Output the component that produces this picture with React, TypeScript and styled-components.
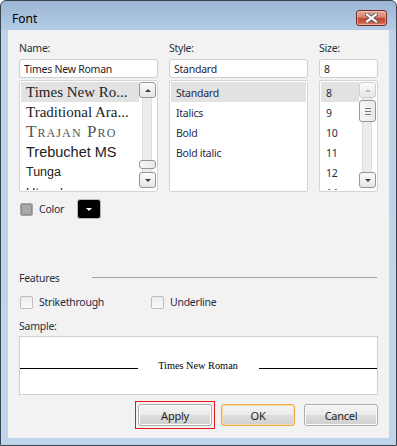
import React from "react";
import styled, { createGlobalStyle, css } from "styled-components";

const UI = `"Noto Sans", "Open Sans", sans-serif`;
const UI_SIZE = 10.5;
const UI_SPACING = -0.25;

const GlobalStyle = createGlobalStyle`
  html, body { margin: 0; padding: 0; background: #ffffff; }
  body { font-family: ${UI}; }
  * { box-sizing: border-box; }
`;

const Window = styled.div`
  width: 397px;
  height: 446px;
  border: 1px solid #3a4552;
  border-radius: 6px 6px 0 0;
  background: linear-gradient(to bottom, #9bb6d4 0px, #b4cce6 29px, #bcd3eb 30px, #bed5ec 100%);
  display: flex;
  flex-direction: column;
  padding: 0 7px 7px 7px;
  overflow: hidden;
`;

const TitleBar = styled.div`
  height: 29px;
  flex: none;
  display: flex;
  align-items: flex-start;
  justify-content: space-between;
  padding-left: 4px;
`;

const Title = styled.div`
  margin-top: 10px;
  font-family: ${UI};
  font-size: 12px;
  line-height: 16px;
  color: #000;
`;

const CloseButton = styled.div`
  margin-top: 9px;
  margin-right: 2px;
  width: 31px;
  height: 16px;
  border: 1px solid #6b2d25;
  border-radius: 3px;
  background: linear-gradient(to bottom, #e9a99c 0%, #d88172 45%, #c04a35 50%, #c9573f 80%, #e08a6c 100%);
  box-shadow: inset 0 0 0 1px rgba(255, 220, 210, 0.45);
  display: flex;
  align-items: center;
  justify-content: center;
`;

const Client = styled.div`
  flex: 1;
  background: #f2f2f2;
  padding: 10px 11px 12px 11px;
  display: flex;
  flex-direction: column;
`;

const Columns = styled.div`
  display: grid;
  grid-template-columns: 139px 139px 59px;
  column-gap: 11px;
`;

const Column = styled.div`
  display: flex;
  flex-direction: column;
`;

const Label = styled.div`
  font-family: ${UI};
  font-size: ${UI_SIZE}px;
  letter-spacing: ${UI_SPACING}px;
  line-height: 17px;
  height: 17px;
  color: #2a2f3a;
  white-space: nowrap;
`;

const TextBox = styled.div`
  margin-top: 2px;
  height: 19px;
  border: 1px solid #cfcfcf;
  border-radius: 3px;
  background: #fff;
  padding-left: 4px;
  padding-top: 1px;
  display: flex;
  align-items: center;
  font-family: ${UI};
  font-size: ${UI_SIZE}px;
  letter-spacing: ${UI_SPACING}px;
  color: #1e1e2a;
  white-space: nowrap;
  overflow: hidden;
`;

const ListBox = styled.div`
  margin-top: 2px;
  height: 112px;
  border: 1px solid #d4d4d4;
  border-radius: 2px;
  background: #fff;
  padding: 1px;
  display: flex;
  overflow: hidden;
`;

const Items = styled.div`
  flex: 1;
  min-width: 0;
  overflow: hidden;
  display: flex;
  flex-direction: column;
`;

const Item = styled.div<{ $selected?: boolean; $font?: string; $size?: number; $color?: string; $caps?: boolean; $spacing?: number }>`
  flex: none;
  height: 20px;
  display: flex;
  align-items: center;
  padding-left: 5px;
  padding-top: ${(p) => (p.$font ? 0 : 2)}px;
  white-space: nowrap;
  background: ${(p) => (p.$selected ? "#e2e2e2" : "transparent")};
  font-family: ${(p) => p.$font ?? UI};
  font-size: ${(p) => p.$size ?? UI_SIZE}px;
  color: ${(p) => p.$color ?? "#1f2a48"};
  letter-spacing: ${(p) => p.$spacing ?? UI_SPACING}px;
  ${(p) =>
    p.$caps &&
    css`
      font-variant: small-caps;
    `}
`;

const ScrollBar = styled.div`
  flex: none;
  width: 17px;
  display: flex;
  flex-direction: column;
  padding-bottom: 2px;
`;

const ArrowButton = styled.div<{ $disabled?: boolean }>`
  flex: none;
  height: 16px;
  border: 1px solid ${(p) => (p.$disabled ? "#c9ced4" : "#8f979f")};
  border-radius: 3px;
  background: linear-gradient(to bottom, #fbfbfb, #e6e6e6);
  display: flex;
  align-items: center;
  justify-content: center;
`;

const Arrow = styled.span<{ $dir: "up" | "down"; $disabled?: boolean }>`
  width: 0;
  height: 0;
  border-left: 3px solid transparent;
  border-right: 3px solid transparent;
  ${(p) =>
    p.$dir === "up"
      ? css`
          border-bottom: 3px solid ${p.$disabled ? "#b8bcc2" : "#3c3c3c"};
        `
      : css`
          border-top: 3px solid ${p.$disabled ? "#b8bcc2" : "#3c3c3c"};
        `}
`;

const Track = styled.div`
  flex: 1;
  display: flex;
  flex-direction: column;
  background: linear-gradient(to right, transparent 3px, #dedede 3px, #dedede 4px, #ececec 4px, #ececec 12px, #dedede 12px, #dedede 13px, transparent 13px);
`;

const Thumb = styled.div<{ $offset: number; $height: number }>`
  flex: none;
  margin-top: ${(p) => p.$offset}px;
  height: ${(p) => p.$height}px;
  border: 1px solid #8f979f;
  border-radius: 3px;
  background: linear-gradient(to right, #f7f7f7, #e9e9e9);
  display: flex;
  flex-direction: column;
  align-items: center;
  justify-content: center;
  gap: 2px;
`;

const Grip = styled.span`
  width: 6px;
  height: 1px;
  background: #6f7780;
`;

const ColorRow = styled.div`
  margin-top: 7px;
  height: 20px;
  display: flex;
  align-items: center;
`;

const CheckLabel = styled.label`
  display: flex;
  align-items: center;
  gap: 6px;
  font-family: ${UI};
  font-size: ${UI_SIZE}px;
  letter-spacing: ${UI_SPACING}px;
  line-height: 15px;
  color: #1f2a48;
  white-space: nowrap;
`;

const CheckBox = styled.span<{ $mixed?: boolean }>`
  width: 13px;
  height: 13px;
  margin-left: 1px;
  border: 1px solid ${(p) => (p.$mixed ? "#a5a5a5" : "#bdbdbd")};
  border-radius: 2px;
  background: linear-gradient(to bottom, #ececec, #fafafa);
  display: flex;
  align-items: center;
  justify-content: center;
  ${(p) =>
    p.$mixed &&
    css`
      &::after {
        content: "";
        width: 9px;
        height: 9px;
        border-radius: 1px;
        background: #a8a8a8;
        border: 1px solid #8c8c8c;
      }
    `}
`;

const SwatchButton = styled.div`
  margin-left: 13px;
  width: 24px;
  height: 20px;
  border: 1px solid #b9b9b9;
  border-radius: 3px;
  background: #000;
  display: flex;
  align-items: center;
  justify-content: center;
`;

const SwatchArrow = styled.span`
  width: 0;
  height: 0;
  border-left: 3px solid transparent;
  border-right: 3px solid transparent;
  border-top: 3px solid #fff;
`;

const GroupHeader = styled.div`
  margin-top: 51px;
  height: 15px;
  display: flex;
  align-items: center;
  gap: 32px;
`;

const GroupTitle = styled.span`
  font-family: ${UI};
  font-size: ${UI_SIZE}px;
  letter-spacing: ${UI_SPACING}px;
  line-height: 15px;
  padding-top: 1px;
  color: #2a2f3a;
`;

const GroupLine = styled.span`
  flex: 1;
  height: 1px;
  background: #a3a3a3;
  margin-right: 1px;
`;

const OptionsRow = styled.div`
  margin-top: 10px;
  height: 14px;
  display: grid;
  grid-template-columns: 131px auto;
  align-items: center;
`;

const SampleLabel = styled(Label)`
  margin-top: 9px;
`;

const SampleBox = styled.div`
  margin-top: 1px;
  height: 59px;
  border: 1px solid #d0d0d0;
  background: #fff;
  display: flex;
  align-items: center;
`;

const SampleLine = styled.span`
  flex: 1;
  height: 1px;
  margin-top: 6px;
  background: #000;
`;

const SampleText = styled.span`
  padding: 0 21px 0 20px;
  font-family: "Liberation Serif", "Times New Roman", serif;
  font-size: 10.3px;
  color: #000;
  white-space: nowrap;
`;

const ButtonRow = styled.div`
  margin-top: 9px;
  display: flex;
  justify-content: flex-end;
  gap: 9px;
`;

const Button = styled.div<{ $default?: boolean; $marked?: boolean }>`
  position: relative;
  width: 74px;
  height: 22px;
  border: 1px solid ${(p) => (p.$default ? "#eba84b" : "#adadad")};
  border-radius: 3px;
  background: linear-gradient(to bottom, #f3f3f3 0%, #ebebeb 50%, #dddddd 51%, #cfcfcf 100%);
  box-shadow: inset 0 0 0 1px ${(p) => (p.$default ? "#fbdca4" : "#fcfcfc")};
  display: flex;
  align-items: center;
  justify-content: center;
  font-family: ${UI};
  font-size: ${UI_SIZE + 0.5}px;
  letter-spacing: ${UI_SPACING}px;
  color: #1e1e1e;
  ${(p) =>
    p.$marked &&
    css`
      &::after {
        content: "";
        position: absolute;
        inset: -4px;
        border: 1px solid #e8141b;
        pointer-events: none;
      }
    `}
`;

type FontItem = { text: string; font?: string; size?: number; color?: string; caps?: boolean; spacing?: number };

const fonts: FontItem[] = [
  { text: "Times New Ro...", font: `"Liberation Serif", serif`, size: 15, color: "#222", spacing: 0 },
  { text: "Traditional Ara...", font: `"Liberation Serif", serif`, size: 15, color: "#222", spacing: 0 },
  { text: "Trajan Pro", font: `"Liberation Serif", serif`, size: 17, color: "#555", caps: true, spacing: 1.1 },
  { text: "Trebuchet MS", font: `"Liberation Sans", sans-serif`, size: 14.5, color: "#222", spacing: 0 },
  { text: "Tunga", font: `"Liberation Sans", sans-serif`, size: 12.5, color: "#222", spacing: 0 },
  { text: "Utsaah", font: `"Liberation Sans", sans-serif`, size: 13, color: "#222", spacing: 0 },
];

const styles = ["Standard", "Italics", "Bold", "Bold italic"];
const sizes = ["8", "9", "10", "11", "12", "14"];

function CloseGlyph() {
  return (
    <svg width="13" height="10" viewBox="0 0 13 10">
      <path d="M2 1.5 L11 8.5 M11 1.5 L2 8.5" stroke="#5a5a5a" strokeWidth="4" strokeLinecap="square" />
      <path d="M2 1.5 L11 8.5 M11 1.5 L2 8.5" stroke="#ffffff" strokeWidth="2.2" strokeLinecap="square" />
    </svg>
  );
}

function Scroll({ offset, height, grip, upDisabled }: { offset: number; height: number; grip?: boolean; upDisabled?: boolean }) {
  return (
    <ScrollBar>
      <ArrowButton $disabled={upDisabled}>
        <Arrow $dir="up" $disabled={upDisabled} />
      </ArrowButton>
      <Track>
        <Thumb $offset={offset} $height={height}>
          {grip && (
            <>
              <Grip />
              <Grip />
              <Grip />
            </>
          )}
        </Thumb>
      </Track>
      <ArrowButton>
        <Arrow $dir="down" />
      </ArrowButton>
    </ScrollBar>
  );
}

export default function App() {
  return (
    <>
      <GlobalStyle />
      <Window>
        <TitleBar>
          <Title>Font</Title>
          <CloseButton>
            <CloseGlyph />
          </CloseButton>
        </TitleBar>
        <Client>
          <Columns>
            <Column>
              <Label>Name:</Label>
              <TextBox>Times New Roman</TextBox>
              <ListBox>
                <Items>
                  {fonts.map((f, i) => (
                    <Item
                      key={f.text}
                      $selected={i === 0}
                      $font={f.font}
                      $size={f.size}
                      $color={f.color}
                      $caps={f.caps}
                      $spacing={f.spacing}
                    >
                      {f.text}
                    </Item>
                  ))}
                </Items>
                <Scroll offset={62} height={9} />
              </ListBox>
            </Column>
            <Column>
              <Label>Style:</Label>
              <TextBox>Standard</TextBox>
              <ListBox>
                <Items>
                  {styles.map((s, i) => (
                    <Item key={s} $selected={i === 0}>
                      {s}
                    </Item>
                  ))}
                </Items>
              </ListBox>
            </Column>
            <Column>
              <Label>Size:</Label>
              <TextBox>8</TextBox>
              <ListBox>
                <Items>
                  {sizes.map((s, i) => (
                    <Item key={s} $selected={i === 0}>
                      {s}
                    </Item>
                  ))}
                </Items>
                <Scroll offset={2} height={22} grip upDisabled />
              </ListBox>
            </Column>
          </Columns>

          <ColorRow>
            <CheckLabel>
              <CheckBox $mixed />
              Color
            </CheckLabel>
            <SwatchButton>
              <SwatchArrow />
            </SwatchButton>
          </ColorRow>

          <GroupHeader>
            <GroupTitle>Features</GroupTitle>
            <GroupLine />
          </GroupHeader>

          <OptionsRow>
            <CheckLabel>
              <CheckBox />
              Strikethrough
            </CheckLabel>
            <CheckLabel>
              <CheckBox />
              Underline
            </CheckLabel>
          </OptionsRow>

          <SampleLabel>Sample:</SampleLabel>
          <SampleBox>
            <SampleLine />
            <SampleText>Times New Roman</SampleText>
            <SampleLine />
          </SampleBox>

          <ButtonRow>
            <Button $marked>Apply</Button>
            <Button $default>OK</Button>
            <Button>Cancel</Button>
          </ButtonRow>
        </Client>
      </Window>
    </>
  );
}
